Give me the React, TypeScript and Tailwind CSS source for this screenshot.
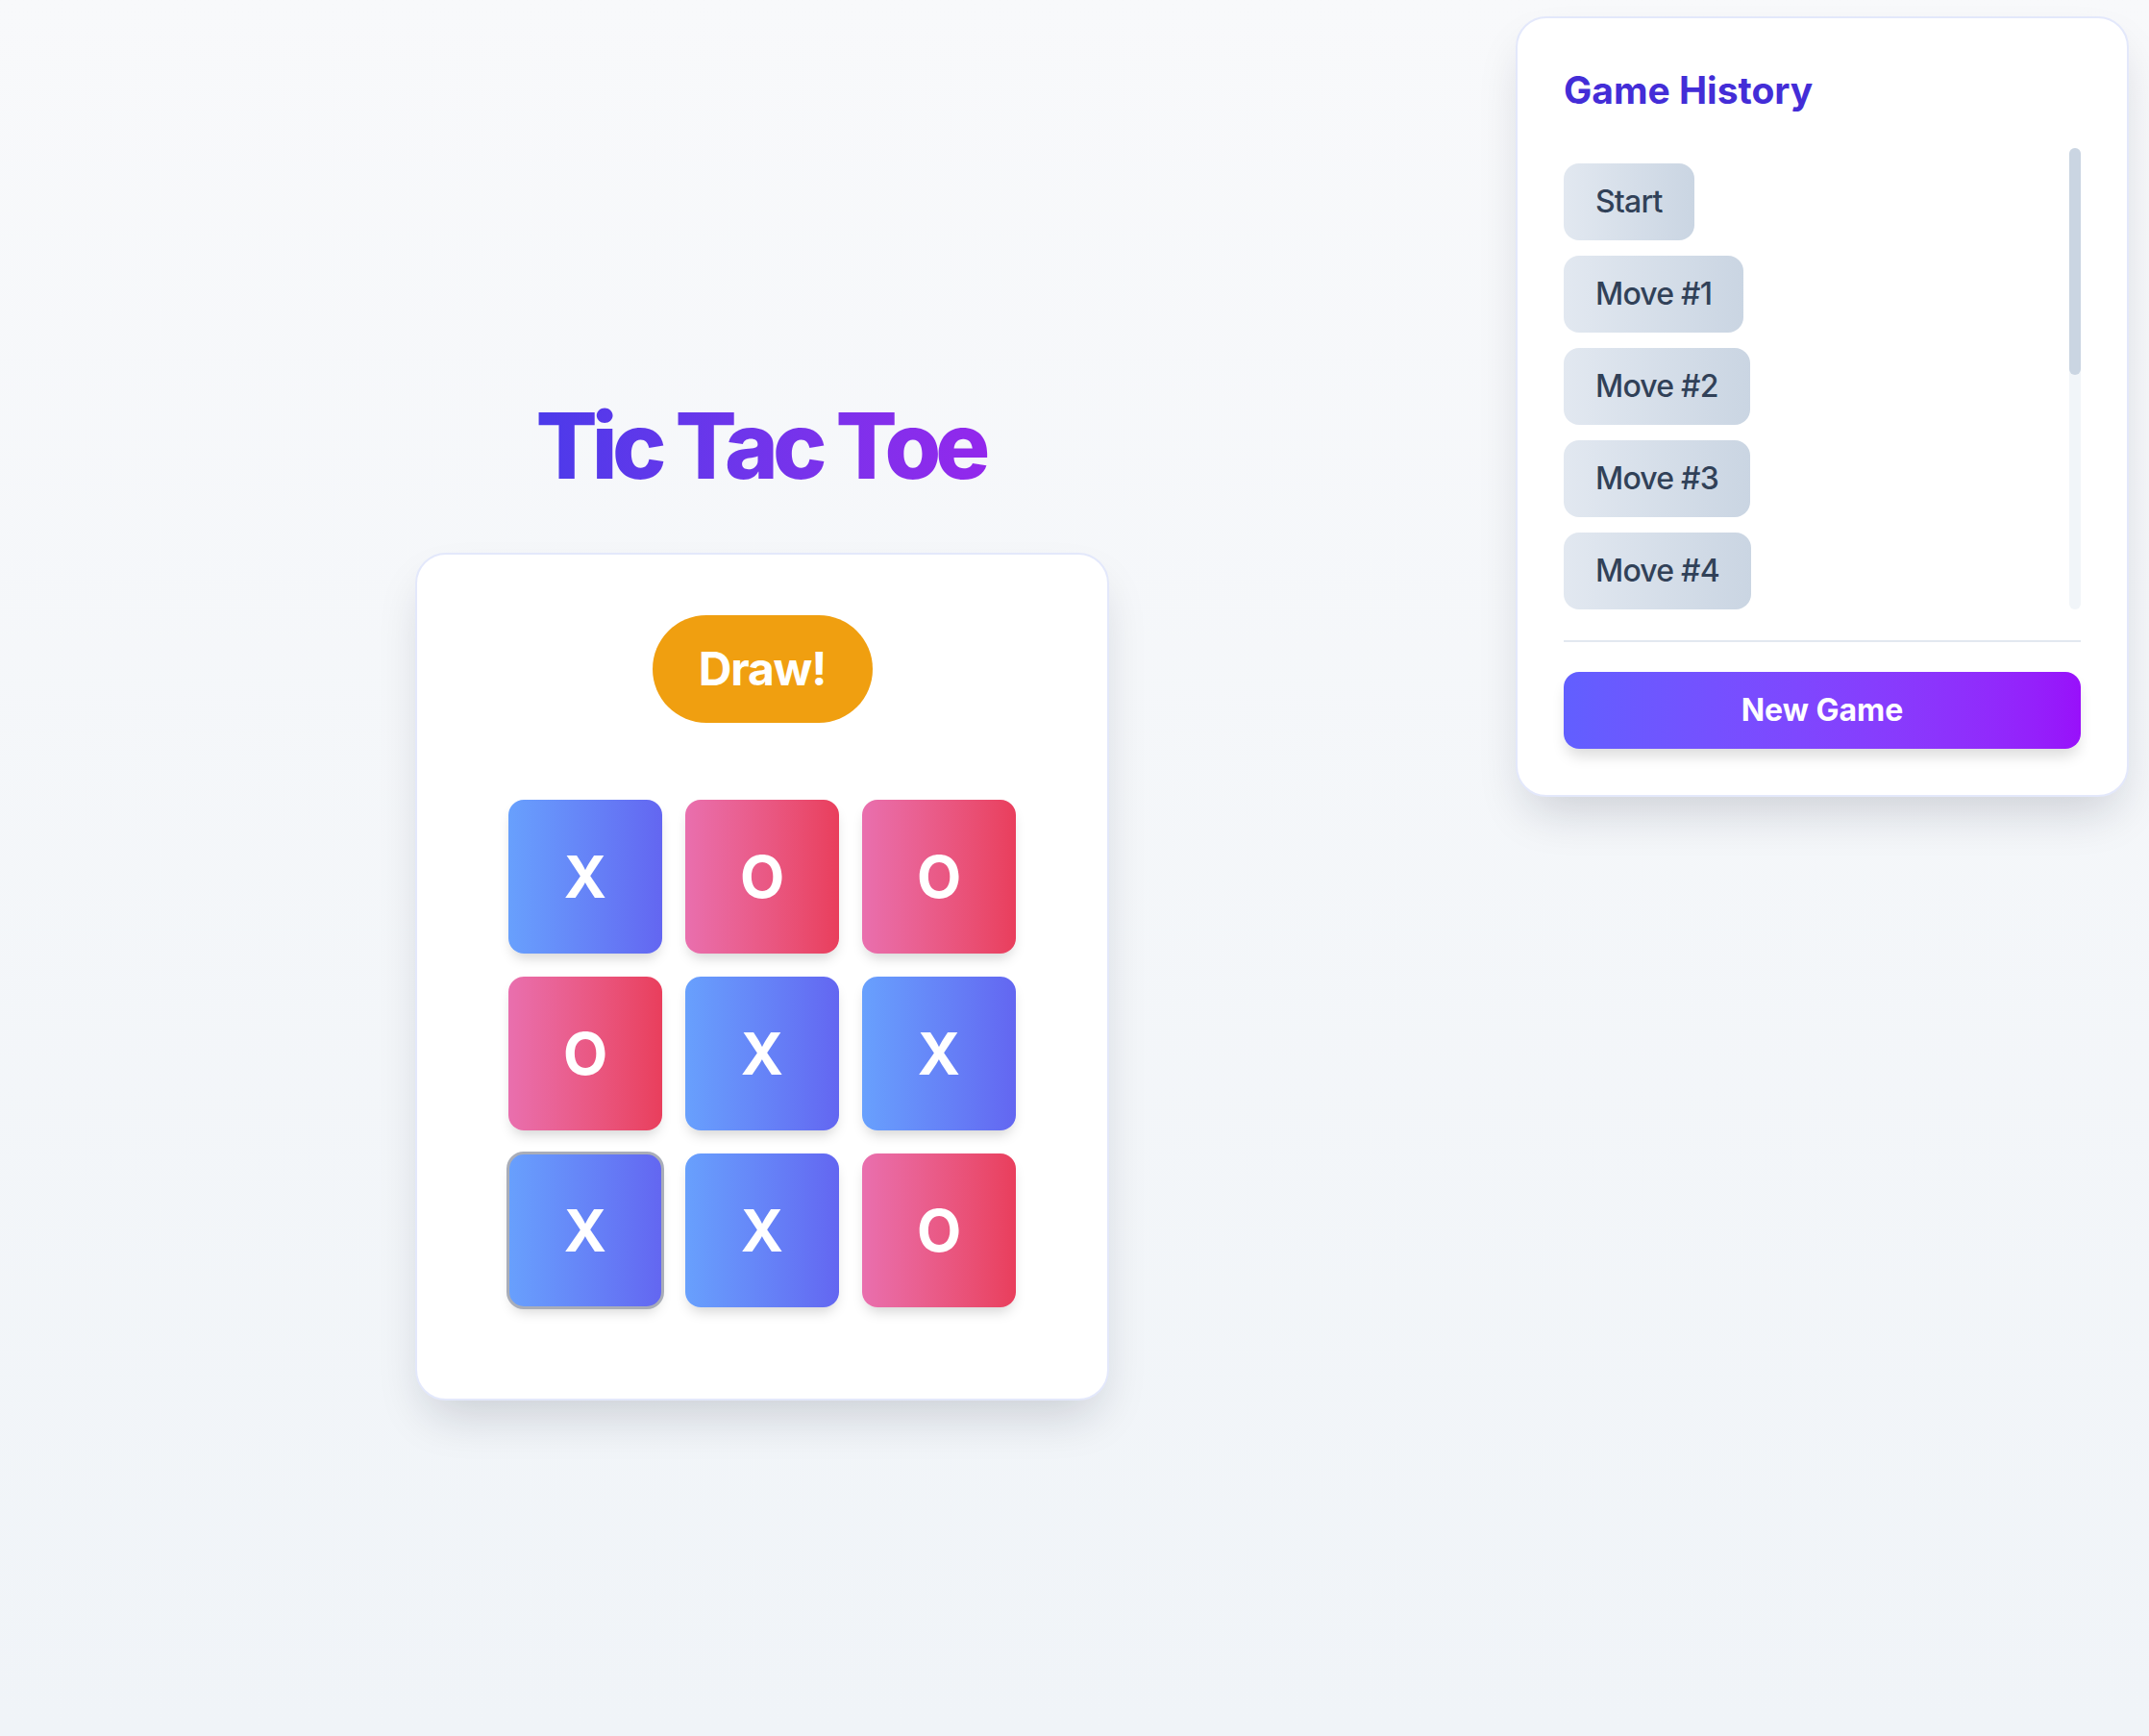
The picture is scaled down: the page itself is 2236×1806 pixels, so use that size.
import { useState } from 'react'

type Cell = 'X' | 'O' | null

const FINAL: Cell[] = ['X', 'O', 'O', 'O', 'X', 'X', 'X', 'X', 'O']
const MOVES = 9
// rows that fit in the 480px history viewport
const VISIBLE = 5

function Square({ value, focused }: { value: Cell; focused: boolean }) {
  const tone =
    value === 'X'
      ? 'bg-gradient-to-r from-[#68a0fd] to-[#6366f1]'
      : 'bg-gradient-to-r from-[#e96fae] to-[#e93e5c]'
  return (
    <button
      className={`w-[160px] h-[160px] rounded-2xl flex items-center justify-center text-white text-[60px] font-bold leading-none shadow-[0_8px_14px_-4px_rgba(0,0,0,0.18)] ${tone} ${
        focused ? 'outline-[3px] outline-solid outline-[#a9adb8] -outline-offset-1' : ''
      }`}
    >
      {value}
    </button>
  )
}

export default function App() {
  const [board] = useState<Cell[]>(FINAL)
  const steps = ['Start', ...Array.from({ length: MOVES }, (_, i) => `Move #${i + 1}`)]

  return (
    <div className="min-h-screen w-full flex bg-gradient-to-b from-[#f8f9fb] to-[#f0f4f8] font-['Inter',sans-serif]">
      {/* Board column */}
      <main className="flex-1 flex flex-col items-center pt-[416px] pl-[9px]">
        <h1 className="text-[95px] leading-none font-extrabold tracking-[-0.062em] bg-gradient-to-r from-[#4b3aea] to-[#9327ec] bg-clip-text text-transparent pr-[4px]">
          Tic Tac Toe
        </h1>

        <div className="mt-[64px] w-[722px] bg-white rounded-[32px] border-2 border-[#e3e8fb] shadow-[0_25px_50px_-12px_rgba(15,23,42,0.18)] flex flex-col items-center pt-[63px] pb-[95px]">
          <div className="h-[112px] w-[229px] rounded-full bg-[#f09f10] flex items-center justify-center text-white text-[48px] font-bold leading-none tracking-[-0.025em]">
            Draw!
          </div>

          <div className="mt-[80px] grid grid-cols-3 gap-[24px]">
            {board.map((v, i) => (
              <Square key={i} value={v} focused={i === 6} />
            ))}
          </div>
        </div>
      </main>

      {/* History */}
      <aside className="self-start w-[638px] mt-[17px] mr-[21px] bg-white rounded-[32px] border-2 border-[#e3e8fb] shadow-[0_25px_50px_-12px_rgba(15,23,42,0.18)] p-12">
        <h2 className="mt-[4px] text-[39px] leading-[46px] font-bold text-indigo-700">Game History</h2>

        <div className="mt-[37px] h-[480px] flex">
          <div className="flex-1 py-4 flex flex-col items-start gap-4">
            {steps.slice(0, VISIBLE).map(s => (
              <button
                key={s}
                className="shrink-0 h-[80px] px-[33px] rounded-2xl bg-gradient-to-r from-slate-200 to-slate-300 text-slate-700 text-[32px] font-medium leading-none tracking-[-0.025em]"
              >
                {s}
              </button>
            ))}
          </div>
          {/* scrollbar */}
          <div className="w-3 rounded-full bg-slate-100">
            <div className="h-[236px] rounded-full bg-slate-300" />
          </div>
        </div>

        <div className="mt-8 pt-[31px] border-t-2 border-slate-200">
          <button className="w-full h-[80px] rounded-2xl bg-gradient-to-r from-indigo-500 to-purple-600 text-white text-[32px] font-bold leading-none shadow-[0_10px_15px_-3px_rgba(0,0,0,0.15)]">
            New Game
          </button>
        </div>
      </aside>
    </div>
  )
}
